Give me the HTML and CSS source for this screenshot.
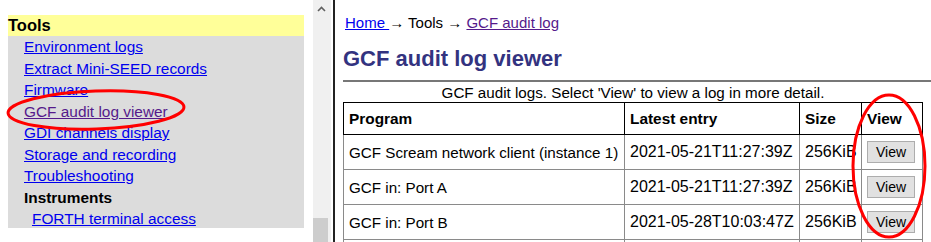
FILE: index.html
```
<html>
<head>
<title>GCF audit log viewer</title>
<link rel="stylesheet" href="styles.css">
</head>
<body>

<div class="frames">
  <div class="nav-frame">
    <div class="nav-page">
      <div class="menu">
        <div class="menu-head">Tools</div>
        <ul class="menu-list">
          <li><a href="#">Environment logs</a></li>
          <li><a href="#">Extract Mini-SEED records</a></li>
          <li><a href="#">Firmware</a></li>
          <li><a href="#" class="visited">GCF audit log viewer</a></li>
          <li><a href="#">GDI channels display</a></li>
          <li><a href="#">Storage and recording</a></li>
          <li><a href="#">Troubleshooting</a></li>
          <li class="sub-head">Instruments</li>
          <li class="sub"><a href="#">FORTH terminal access</a></li>
        </ul>
      </div>
    </div>
    <div class="scrollbar">
      <svg class="scroll-up" width="9" height="6" viewBox="0 0 9 6"><path d="M1 5 L4.5 1.5 L8 5" fill="none" stroke="#606060" stroke-width="1.6"/></svg>
      <div class="scroll-thumb"></div>
    </div>
  </div>

  <div class="main-frame">
    <div class="crumbs">
      <a href="#">Home </a> &rarr; Tools &rarr; <a href="#" class="visited">GCF audit log</a>
    </div>
    <h1>GCF audit log viewer</h1>
    <hr>
    <table class="logs">
      <caption>GCF audit logs. Select 'View' to view a log in more detail.</caption>
      <thead>
        <tr><th class="c-prog">Program</th><th class="c-date">Latest entry</th><th class="c-size">Size</th><th class="c-view">View</th></tr>
      </thead>
      <tbody>
        <tr><td>GCF Scream network client (instance 1)</td><td class="num">2021-05-21T11:27:39Z</td><td class="num">256KiB</td><td><button class="view-btn">View</button></td></tr>
        <tr><td>GCF in: Port A</td><td class="num">2021-05-21T11:27:39Z</td><td class="num">256KiB</td><td><button class="view-btn">View</button></td></tr>
        <tr><td>GCF in: Port B</td><td class="num">2021-05-28T10:03:47Z</td><td class="num">256KiB</td><td><button class="view-btn">View</button></td></tr>
        <tr><td>&nbsp;</td><td></td><td></td><td></td></tr>
      </tbody>
    </table>
  </div>
</div>

<!-- annotation marks drawn over the screenshot -->
<svg class="marks" width="931" height="242" viewBox="0 0 931 242">
  <ellipse cx="96" cy="110" rx="88" ry="19" transform="rotate(-2 96 110)" fill="none" stroke="#f00" stroke-width="3"/>
  <ellipse cx="889" cy="166" rx="36" ry="71" fill="none" stroke="#f00" stroke-width="3"/>
</svg>

</body>
</html>
```

FILE: styles.css
```
body {
  margin: 0;
  font-family: "Liberation Sans", Arial, Helvetica, sans-serif;
  font-size: 15px;
  color: #000;
  background: #fff;
  overflow: hidden;
  position: relative;
  width: 931px;
  height: 242px;
}

a:link {
  color: #0000ee;
}

a.visited {
  color: #551a8b;
}

.frames {
  display: flex;
  height: 242px;
}

.nav-frame {
  display: flex;
  width: 331px;
  flex: none;
  border-right: 2px solid #222;
  padding-right: 2px;
}

.nav-page {
  flex: 1;
  padding: 15px 9px 0 8px;
  overflow: hidden;
  font-size: 15.4px;
}

.menu-head {
  background-color: #ffff99;
  font-weight: bold;
  font-size: 16.5px;
  height: 21px;
  line-height: 21px;
}

.menu-list {
  list-style: none;
  margin: 0;
  padding: 0 0 0 16px;
  background-color: #dcdcdc;
  height: 192px;
}

.menu-list li {
  line-height: 21.5px;
}

.menu-list .sub-head {
  font-weight: bold;
}

.menu-list .sub {
  padding-left: 8px;
}

.scrollbar {
  width: 18px;
  flex: none;
  background-color: #f0f0f0;
  display: flex;
  flex-direction: column;
  align-items: center;
  justify-content: space-between;
}

.scroll-up {
  margin-top: 6px;
  margin-left: -2px;
}

.scroll-thumb {
  width: 15px;
  height: 24px;
  align-self: flex-start;
  background-color: #cdcdcd;
}

.main-frame {
  flex: 1;
  padding: 0 0 0 8px;
  overflow: hidden;
}

.crumbs {
  margin-top: 14px;
  padding-left: 2px;
  line-height: 17px;
}

h1 {
  margin: 15px 0 0 0;
  font-size: 22px;
  line-height: 25px;
  color: #333380;
}

hr {
  margin: 9px 0 0 0;
  border: 0;
  border-top: 2px solid #777;
  height: 0;
}

.logs {
  border-collapse: collapse;
  table-layout: fixed;
  width: 579px;
  margin-top: 2px;
  font-size: 15.2px;
}

.logs caption {
  line-height: 17px;
  padding-bottom: 1px;
}

.logs th {
  box-sizing: border-box;
  border: 1px solid #000;
  text-align: left;
  padding: 7px 5px;
  line-height: 17px;
  font-size: 15.4px;
}

.c-prog { width: 281px; }
.c-date { width: 175px; }
.c-size { width: 62px; }
.c-view { width: 61px; }

.logs td {
  border: 1px solid #8a8a8a;
  padding: 6px 5px;
  height: 22px;
  white-space: nowrap;
}

.logs td.num {
  font-size: 16px;
}

.view-btn {
  font-family: "Liberation Sans", Arial, sans-serif;
  font-size: 14px;
  width: 48px;
  height: 22px;
  padding: 0;
  background-color: #e1e1e1;
  border: 1px solid #adadad;
  border-radius: 0;
  color: #000;
}

.marks {
  position: absolute;
  left: 0;
  top: 0;
  pointer-events: none;
}
```
